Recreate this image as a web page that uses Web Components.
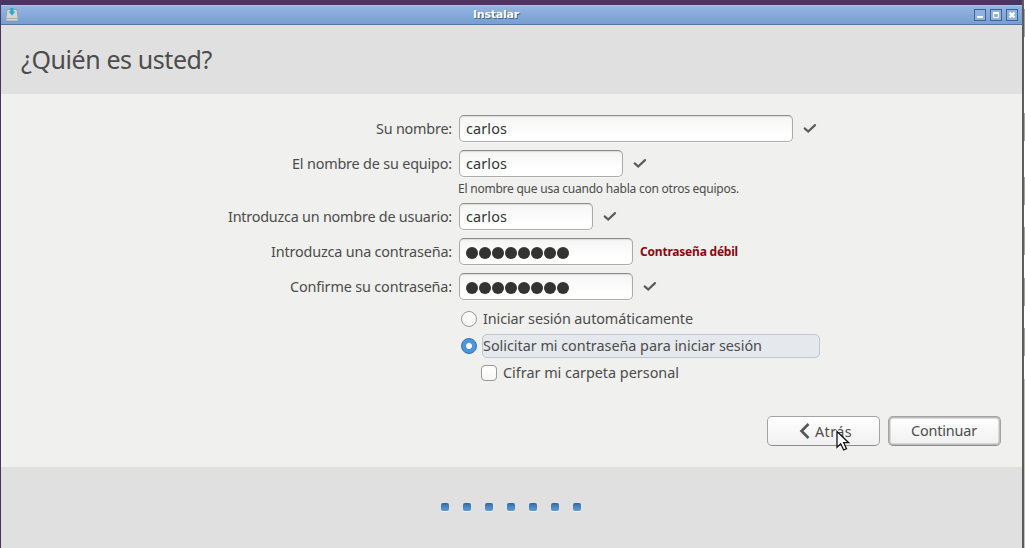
<!DOCTYPE html>
<html lang="es"><head><meta charset="utf-8"><title>Instalar</title>
<style>
html,body{margin:0;height:100%;overflow:hidden;background:#483562}
body{font:14.4px "Noto Sans","Liberation Sans",sans-serif;color:#4c4c4c}
</style></head><body>
<installer-window></installer-window>
<script>
const define=(name,html,init)=>customElements.define(name,class extends HTMLElement{
  connectedCallback(){
    if(this.shadowRoot)return;
    this.attachShadow({mode:'open'}).innerHTML=html;
    if(init)init(this,this.shadowRoot);
  }
});

/* One line of text, tracked so that it fills the width given in "w". */
define('fit-text',`<style>:host{display:inline-block;white-space:pre}span{display:inline-block}</style><span><slot></slot></span>`,(el,root)=>{
  const s=root.querySelector('span'),n=el.textContent.length,w=+el.getAttribute('w');
  const natural=s.getBoundingClientRect().width;
  s.style.letterSpacing=((w-natural)/n)+'px';
});

define('check-mark',`<style>:host{display:block;width:14px;height:12px;margin:-2px 0 0 10px}svg{display:block}</style>
<svg width="14" height="12" viewBox="0 0 14 12"><path d="M1.7 6.4 5.2 9.5 12 3.1" fill="none" stroke="#5b5b5b" stroke-width="2.2" stroke-linecap="round"/></svg>`);

define('text-box',`<style>:host{display:flex;box-sizing:border-box;height:27px;align-items:center;padding:0 0 1px 6px;border:1px solid #aaa;border-top-color:#8c8c8c;border-radius:5px;background:linear-gradient(#f4f5f4,#fff 75%);box-shadow:inset 0 1px 1px #dcdcdc,0 1px #f8f8f8;color:#333}</style><slot></slot>`,
 el=>{el.style.width=el.getAttribute('w')+'px'});

define('secret-dots',`<style>:host{display:flex;gap:1px;padding-top:3px;margin-left:0}i{width:12px;height:12px;border-radius:50%;background:#333431}</style>`+'<i></i>'.repeat(8));

define('form-row',`<style>:host{display:grid;grid-template-columns:452px 1fr;column-gap:7px;height:27px;align-items:center}
.l{text-align:right}.f{display:flex;align-items:center}</style><div class="l"><slot name="label"></slot></div><div class="f"><slot></slot></div>`);

define('choice-row',`<style>:host{display:flex;align-items:center;height:27px;padding-left:460px}
i{box-sizing:border-box;width:16px;height:16px;border:1px solid #999;border-radius:50%;background:linear-gradient(#fff,#f7f7f7);margin:0 5px 0 1px;flex:none}
:host([checked]) i{border-color:#326fab;background:radial-gradient(circle,#fff 2.5px,#4a97e0 3.5px)}
:host([box]){padding-left:480px}:host([box]) i{border-radius:4px}
div{box-sizing:border-box;height:24px;display:flex;align-items:center;border:1px solid transparent;border-radius:5px}
:host([checked]) div{width:338px;border-color:#bac8d3;background:#e5e8ec}
</style><i></i><div><slot></slot></div>`);

define('push-button',`<style>:host{box-sizing:border-box;display:flex;align-items:center;justify-content:center;width:113px;height:30px;border:1px solid #a3a3a3;border-bottom-color:#8d8d8d;border-radius:5px;background:linear-gradient(#fff,#f0f0f0)}
:host([primary]){box-shadow:inset 0 0 0 1.5px #bcbcbc;padding:0 1px 2px 0}:host(:not([primary])){padding-left:4px}</style><slot name="icon"></slot><slot></slot>`);

define('title-bar',`<style>:host{box-sizing:border-box;height:20px;display:grid;grid-template-columns:1fr auto 1fr;align-items:center;border-top:1px solid #a9c7ee;border-bottom:1px solid #5674a0;background:linear-gradient(#95b5e3,#779fd0)}
b{font:bold 11px "DejaVu Sans",sans-serif;color:#fff;text-shadow:1px 1px #46628b;margin:-2px 0 0 -31px}
svg{display:block}.i{padding-left:5px}.c{display:flex;gap:4px;justify-content:flex-end;padding-right:4px}</style>
<div class="i"><svg width="12" height="14" viewBox="0 0 12 14"><path d="M1 1.5h10l1 8.5v3H0v-3z" fill="#d6d7d3" stroke="#8b928f" stroke-width=".7"/><path d="M.5 10.5h11" stroke="#aaa"/><path d="M4.4 0h3v3.5h2L6 7.5 2.5 3.5h1.9z" fill="#25aacb"/></svg></div>
<b><fit-text w="46">Instalar</fit-text></b>
<div class="c">
<svg width="12" height="12"><rect x=".5" y=".5" width="11" height="11" fill="#8fb2df" stroke="#3e6496"/><path d="M3 8h6" stroke="#fff" stroke-width="2"/></svg>
<svg width="12" height="12"><rect x=".5" y=".5" width="11" height="11" fill="#8fb2df" stroke="#3e6496"/><path d="M3.5 8.5v-5h5v5z" fill="none" stroke="#fff"/><path d="M3 4h6" stroke="#fff" stroke-width="2"/></svg>
<svg width="12" height="12"><rect x=".5" y=".5" width="11" height="11" fill="#8fb2df" stroke="#3e6496"/><path d="m3.5 3.5 5 5m0-5-5 5" stroke="#fff" stroke-width="2.4"/></svg></div>`);

define('step-dots',`<style>:host{display:flex;gap:14px}i{width:8px;height:8px;border-radius:2px;background:linear-gradient(#3a5f87,#4280bd 35%,#5b9bd5);box-shadow:0 1px #f0f4f7}</style>`+'<i></i>'.repeat(7));

define('mouse-pointer',`<style>:host{position:absolute;left:836px;top:430px;width:14px;height:22px}svg{display:block}</style>
<svg width="14" height="22" viewBox="0 0 14 22"><path d="M1 1.5v15.8l3.7-3.5 3 6.2 2.8-1.3-2.8-6h5z" fill="#fff" stroke="#111" stroke-width="1.3"/></svg>`);

define('installer-window',`<style>
:host{display:flex;flex-direction:column;box-sizing:border-box;width:1025px;height:548px;padding:5px 0 0 1px;background:linear-gradient(#fff 9px,#aaa69f 9px 37px,#fff 37px 113px,#a5a5a2 113px 141px,#fff 141px 177px,#a5a5a2 177px 205px,#fff 205px 227px,#a5a5a2 227px 255px,#fff 255px 278px,#a5a5a2 278px 306px,#fff 306px 328px,#a5a5a2 328px 356px,#fff 356px 379px,#c4c4be 379px) 1024px 0/1px 548px no-repeat,linear-gradient(90deg,#483562 1px,transparent 1px 1022px,#5c5c58 1022px 1024px,transparent 1024px),linear-gradient(#483562 5px,#e0e0e0 5px)}
title-bar,header,main,footer{width:1021px;flex:none}
header{box-sizing:border-box;height:69px;background:#e0e0e0;padding:0 0 2px 20px;display:flex;align-items:center;font-size:25px}
main{height:373px;background:#f0f0ee;box-sizing:border-box;padding-top:21px;display:flex;flex-direction:column}
.form{display:flex;flex-direction:column;margin-left:-1px}
.hint{font-size:12px;line-height:18px;margin:3px 0 5px 458px;height:18px}
.gap{margin-top:8px}.weak{font-size:12px;font-weight:bold;color:#8b0710;margin-left:7px}
.buttons{display:flex;gap:8px;justify-content:flex-end;padding-right:21px;margin-top:30px}
footer{box-sizing:border-box;height:81px;background:#e0e0e0;display:flex;justify-content:center;align-items:center;padding-right:2px}
step-dots{margin-top:-1px}
</style>
<title-bar></title-bar>
<header><fit-text w="191">¿Quién es usted?</fit-text></header>
<main><div class="form">
<form-row><fit-text slot="label" w="76">Su nombre:</fit-text><text-box w="334"><fit-text w="41">carlos</fit-text></text-box><check-mark></check-mark></form-row>
<form-row class="gap"><fit-text slot="label" w="160">El nombre de su equipo:</fit-text><text-box w="164"><fit-text w="41">carlos</fit-text></text-box><check-mark></check-mark></form-row>
<div class="hint"><fit-text w="281">El nombre que usa cuando habla con otros equipos.</fit-text></div>
<form-row><fit-text slot="label" w="224">Introduzca un nombre de usuario:</fit-text><text-box w="134"><fit-text w="41">carlos</fit-text></text-box><check-mark></check-mark></form-row>
<form-row class="gap"><fit-text slot="label" w="181">Introduzca una contraseña:</fit-text><text-box w="174"><secret-dots></secret-dots></text-box><span class="weak"><fit-text w="98">Contraseña débil</fit-text></span></form-row>
<form-row class="gap"><fit-text slot="label" w="162">Confirme su contraseña:</fit-text><text-box w="174"><secret-dots></secret-dots></text-box><check-mark></check-mark></form-row>
<choice-row style="margin-top:5px"><fit-text w="210">Iniciar sesión automáticamente</fit-text></choice-row>
<choice-row checked><fit-text w="279">Solicitar mi contraseña para iniciar sesión</fit-text></choice-row>
<choice-row box><fit-text w="176">Cifrar mi carpeta personal</fit-text></choice-row>
</div>
<div class="buttons">
<push-button><svg slot="icon" style="margin-right:5px" width="11" height="16" viewBox="0 0 11 16"><path d="M9.5 1 2.5 8l7 7" fill="none" stroke="#555" stroke-width="2.6"/></svg><fit-text w="37">Atrás</fit-text></push-button>
<push-button primary><fit-text w="66">Continuar</fit-text></push-button>
</div></main>
<footer><step-dots></step-dots></footer>
<mouse-pointer></mouse-pointer>`);
</script></body></html>
